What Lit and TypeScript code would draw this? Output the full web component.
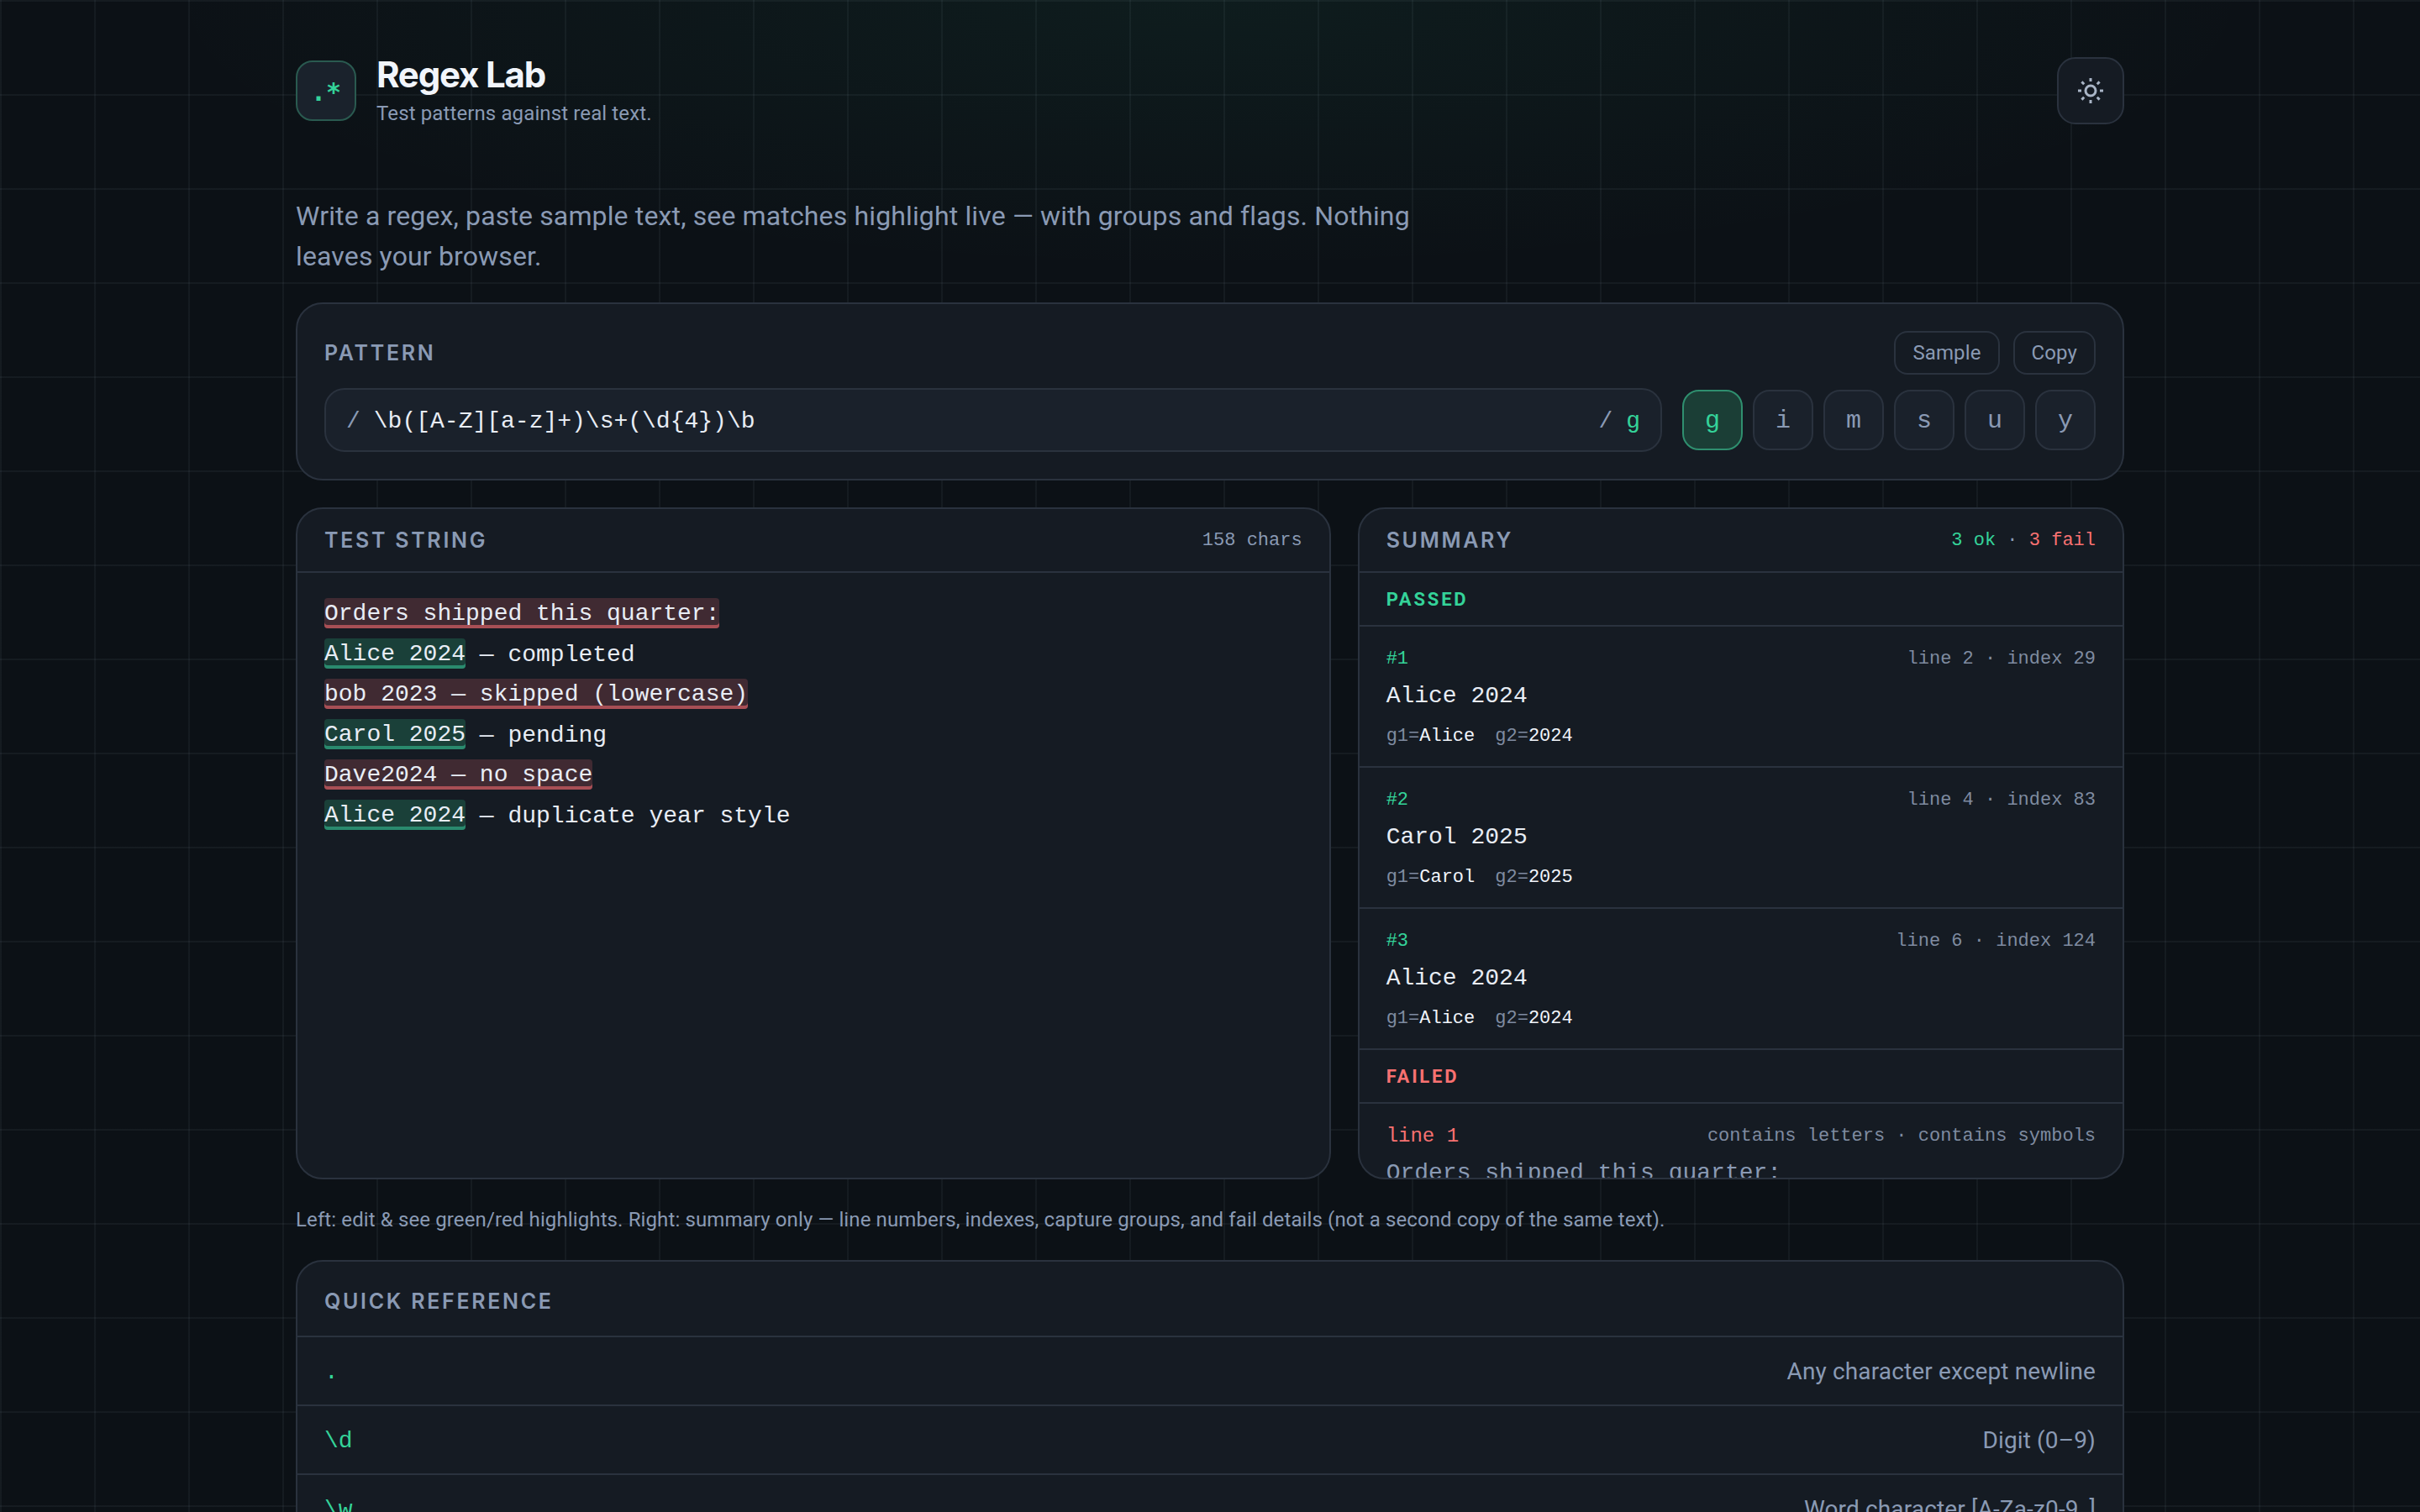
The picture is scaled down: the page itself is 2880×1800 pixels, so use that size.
import {LitElement, css, html, svg} from 'lit';
import {customElement} from 'lit/decorators.js';

const FLAGS = ['g', 'i', 'm', 's', 'u', 'y'];

const LINES = [
  {text: 'Orders shipped this quarter:', rest: '', ok: false},
  {text: 'Alice 2024', rest: ' — completed', ok: true},
  {text: 'bob 2023 — skipped (lowercase)', rest: '', ok: false},
  {text: 'Carol 2025', rest: ' — pending', ok: true},
  {text: 'Dave2024 — no space', rest: '', ok: false},
  {text: 'Alice 2024', rest: ' — duplicate year style', ok: true},
];

const MATCHES = [
  {id: '#1', where: 'line 2 · index 29', value: 'Alice 2024', g1: 'Alice', g2: '2024'},
  {id: '#2', where: 'line 4 · index 83', value: 'Carol 2025', g1: 'Carol', g2: '2025'},
  {id: '#3', where: 'line 6 · index 124', value: 'Alice 2024', g1: 'Alice', g2: '2024'},
];

const REFERENCE = [
  {token: '.', meaning: 'Any character except newline'},
  {token: '\\d', meaning: 'Digit (0–9)'},
  {token: '\\w', meaning: 'Word character [A-Za-z0-9_]'},
];

@customElement('app-root')
export class AppRoot extends LitElement {
  static get styles() {
    return [
      css`
        :host {
          display: block;
          height: 1800px;
          overflow: hidden;
          background-color: #0c1116;
          background-image:
            radial-gradient(ellipse 1800px 460px at 50% 0, rgba(52, 211, 153, 0.06), transparent 70%),
            linear-gradient(rgba(148, 163, 184, 0.07) 2px, transparent 2px),
            linear-gradient(90deg, rgba(148, 163, 184, 0.07) 2px, transparent 2px);
          background-size: auto, 112px 112px, 112px 112px;
          color: #e8edf5;
          font-family: 'Roboto', 'Noto Sans', sans-serif;
        }
        .page {
          width: 2176px;
          margin: 0 auto;
          padding-top: 68px;
        }
        .mono {
          font-family: 'Liberation Mono', monospace;
        }
        .top {
          display: flex;
          align-items: center;
          justify-content: space-between;
          height: 80px;
        }
        .brand {
          display: flex;
          align-items: center;
          gap: 24px;
        }
        .logo {
          box-sizing: border-box;
          width: 72px;
          height: 72px;
          padding-top: 2px;
          border: 2px solid #2a5a50;
          border-radius: 20px;
          background: #1a222c;
          color: #34d399;
          display: flex;
          align-items: center;
          justify-content: center;
          font-family: 'DejaVu Sans Mono', monospace;
          font-size: 30px;
          font-weight: 700;
        }
        .title {
          font-family: 'Inter', sans-serif;
          font-size: 42px;
          line-height: 50px;
          font-weight: 700;
          letter-spacing: -1.2px;
          color: #f1f5fb;
        }
        .subtitle {
          margin-top: 4px;
          font-size: 24px;
          line-height: 34px;
          letter-spacing: 0.12px;
          color: #8a9ab4;
        }
        .theme {
          box-sizing: border-box;
          width: 80px;
          height: 80px;
          border: 2px solid #2a323e;
          border-radius: 22px;
          background: #151b23;
          display: flex;
          align-items: center;
          justify-content: center;
        }
        .theme svg {
          display: block;
        }
        .lede {
          width: 1400px;
          margin: 85px 0 31px;
          font-size: 32px;
          line-height: 48px;
          letter-spacing: 0.14px;
          color: #8a9ab4;
        }
        .card {
          box-sizing: border-box;
          border: 2px solid #2a323e;
          border-radius: 32px;
          background: #151b23;
          overflow: hidden;
        }
        .pattern {
          padding: 32px;
        }
        .pattern-head {
          display: flex;
          align-items: center;
          justify-content: space-between;
          height: 52px;
        }
        .label {
          font-family: 'Inter', sans-serif;
          font-size: 25px;
          font-weight: 600;
          letter-spacing: 2.7px;
          color: #8a9ab4;
        }
        .actions {
          display: flex;
          gap: 16px;
        }
        .btn {
          box-sizing: border-box;
          height: 52px;
          padding: 0 20px;
          border: 2px solid #2a323e;
          border-radius: 16px;
          display: flex;
          align-items: center;
          font-size: 24px;
          letter-spacing: 0.12px;
          color: #8a9ab4;
        }
        .pattern-row {
          display: flex;
          align-items: center;
          gap: 24px;
          margin-top: 16px;
        }
        .input {
          flex: 1;
          box-sizing: border-box;
          height: 76px;
          padding: 2px 24px 0;
          border: 2px solid #2a323e;
          border-radius: 24px;
          background: #1a212b;
          display: flex;
          align-items: center;
          gap: 16px;
          font-size: 28px;
          color: #e8edf5;
        }
        .input .expr {
          flex: 1;
        }
        .slash {
          color: #8a9ab4;
        }
        .green {
          color: #34d399;
        }
        .red {
          color: #f87171;
        }
        .flags {
          display: flex;
          gap: 12px;
        }
        .flag {
          box-sizing: border-box;
          width: 72px;
          height: 72px;
          padding-top: 2px;
          border: 2px solid #2a323e;
          border-radius: 20px;
          background: #1a212b;
          display: flex;
          align-items: center;
          justify-content: center;
          font-size: 30px;
          color: #8a9ab4;
        }
        .flag.on {
          border-color: #2f8f6f;
          background: #1b3e36;
          color: #34d399;
        }
        .panels {
          display: grid;
          grid-template-columns: 1.35fr 1fr;
          gap: 32px;
          height: 800px;
          margin-top: 32px;
        }
        .panel {
          display: flex;
          flex-direction: column;
        }
        .panel-head {
          flex: none;
          box-sizing: border-box;
          height: 76px;
          padding: 0 32px;
          border-bottom: 2px solid #2a323e;
          display: flex;
          align-items: center;
          justify-content: space-between;
        }
        .count {
          font-size: 22px;
          color: #8a9ab4;
        }
        .source {
          padding: 24px 32px;
          font-size: 28px;
        }
        .source-line {
          height: 48px;
          line-height: 52px;
          white-space: pre;
        }
        .hit {
          display: inline-block;
          height: 36px;
          line-height: 38px;
          border-radius: 4px;
          vertical-align: top;
          margin-top: 6px;
        }
        .hit.ok {
          background: #1a4039;
          box-shadow: inset 0 -4px 0 #2a8a6e;
        }
        .hit.bad {
          background: #402a32;
          box-shadow: inset 0 -4px 0 #a84f55;
        }
        .summary {
          flex: 1;
          min-height: 0;
          overflow: hidden;
        }
        .section {
          box-sizing: border-box;
          height: 64px;
          padding: 0 32px;
          border-bottom: 2px solid #2a323e;
          display: flex;
          align-items: center;
          font-size: 22px;
          font-weight: 700;
          letter-spacing: 2.8px;
        }
        .match {
          box-sizing: border-box;
          height: 168px;
          padding: 22px 32px 0;
          border-bottom: 2px solid #2a323e;
        }
        .meta {
          display: flex;
          align-items: center;
          justify-content: space-between;
          height: 32px;
          font-size: 22px;
        }
        .where {
          color: #7f8ba0;
        }
        .value {
          height: 42px;
          line-height: 42px;
          margin-top: 8px;
          font-size: 28px;
          color: #e8edf5;
        }
        .groups {
          display: flex;
          gap: 24px;
          height: 38px;
          line-height: 38px;
          margin-top: 8px;
          font-size: 22px;
          color: #7f8ba0;
        }
        .groups b {
          font-weight: 400;
          color: #f1f5fb;
        }
        .miss {
          padding: 22px 32px 0;
        }
        .miss .line-no {
          font-size: 24px;
        }
        .miss .value {
          color: #8a9ab4;
        }
        .note {
          margin: 30px 0 30px;
          font-size: 24px;
          line-height: 36px;
          letter-spacing: 0.12px;
          color: #8a9ab4;
        }
        .ref-row {
          box-sizing: border-box;
          height: 82px;
          padding: 0 32px;
          border-top: 2px solid #2a323e;
          display: flex;
          align-items: center;
          justify-content: space-between;
        }
        .ref-head {
          box-sizing: border-box;
          display: flex;
          align-items: center;
          height: 88px;
          padding: 6px 32px 0;
        }
        .ref-row .mono {
          padding-top: 3px;
          font-size: 28px;
        }
        .ref-row .meaning {
          font-size: 28px;
          letter-spacing: 0.14px;
          color: #8a9ab4;
        }
      `,
    ];
  }

  renderSun() {
    const rays = [0, 45, 90, 135, 180, 225, 270, 315];
    return html`
      <svg width="36" height="36" viewBox="0 0 36 36" fill="none" stroke="#a9b5c6" stroke-width="3">
        <circle cx="18" cy="18" r="6"></circle>
        ${rays.map((deg) => svg`<line x1="18" y1="3" x2="18" y2="7" transform="rotate(${deg} 18 18)"></line>`)}
      </svg>
    `;
  }

  render() {
    return html`
      <div class="page">
        <header class="top">
          <div class="brand">
            <div class="logo">.*</div>
            <div>
              <div class="title">Regex Lab</div>
              <div class="subtitle">Test patterns against real text.</div>
            </div>
          </div>
          <div class="theme">${this.renderSun()}</div>
        </header>

        <p class="lede">
          Write a regex, paste sample text, see matches highlight live — with groups and flags. Nothing
          leaves your browser.
        </p>

        <section class="card pattern">
          <div class="pattern-head">
            <div class="label">PATTERN</div>
            <div class="actions">
              <div class="btn">Sample</div>
              <div class="btn">Copy</div>
            </div>
          </div>
          <div class="pattern-row">
            <div class="input mono">
              <span class="slash">/</span>
              <span class="expr">\\b([A-Z][a-z]+)\\s+(\\d{4})\\b</span>
              <span class="slash">/</span>
              <span class="green">g</span>
            </div>
            <div class="flags mono">
              ${FLAGS.map((f) => html`<div class="flag ${f === 'g' ? 'on' : ''}">${f}</div>`)}
            </div>
          </div>
        </section>

        <div class="panels">
          <section class="card panel">
            <div class="panel-head">
              <div class="label">TEST STRING</div>
              <div class="count mono">158 chars</div>
            </div>
            <div class="source mono">
              ${LINES.map(
                (l) => html`<div class="source-line"><span class="hit ${l.ok ? 'ok' : 'bad'}">${l.text}</span>${l.rest}</div>`
              )}
            </div>
          </section>

          <section class="card panel">
            <div class="panel-head">
              <div class="label">SUMMARY</div>
              <div class="count mono">
                <span class="green">3 ok</span> · <span class="red">3 fail</span>
              </div>
            </div>
            <div class="summary">
              <div class="section green">PASSED</div>
              ${MATCHES.map(
                (m) => html`
                  <div class="match">
                    <div class="meta mono">
                      <span class="green">${m.id}</span>
                      <span class="where">${m.where}</span>
                    </div>
                    <div class="value mono">${m.value}</div>
                    <div class="groups mono">
                      <span>g1=<b>${m.g1}</b></span>
                      <span>g2=<b>${m.g2}</b></span>
                    </div>
                  </div>
                `
              )}
              <div class="section red">FAILED</div>
              <div class="miss">
                <div class="meta mono">
                  <span class="red line-no">line 1</span>
                  <span class="where">contains letters · contains symbols</span>
                </div>
                <div class="value mono">Orders shipped this quarter:</div>
              </div>
            </div>
          </section>
        </div>

        <p class="note">
          Left: edit &amp; see green/red highlights. Right: summary only — line numbers, indexes, capture groups,
          and fail details (not a second copy of the same text).
        </p>

        <section class="card">
          <div class="ref-head"><div class="label">QUICK REFERENCE</div></div>
          ${REFERENCE.map(
            (r) => html`
              <div class="ref-row">
                <span class="mono green">${r.token}</span>
                <span class="meaning">${r.meaning}</span>
              </div>
            `
          )}
        </section>
      </div>
    `;
  }
}
